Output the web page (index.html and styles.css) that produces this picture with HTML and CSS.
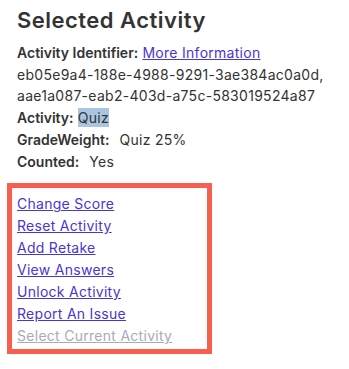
FILE: index.html
```html
<!DOCTYPE html>
<html>
<head>
<meta charset="utf-8">
<link rel="stylesheet" href="styles.css">
</head>
<body>
<div class="page">
  <div class="info">
    <h1 class="title">Selected Activity</h1>
    <div class="row"><span class="label">Activity Identifier:</span> <a class="link" href="#">More Information</a></div>
    <div class="row">eb05e9a4-188e-4988-9291-3ae384ac0a0d,</div>
    <div class="row">aae1a087-eab2-403d-a75c-583019524a87</div>
    <div class="row"><span class="label">Activity:</span> <span class="selected">Quiz</span></div>
    <div class="row"><span class="label label-gap">GradeWeight:</span>Quiz 25%</div>
    <div class="row"><span class="label label-gap">Counted:</span>Yes</div>
  </div>
  <div class="actions">
    <a class="link action" href="#">Change Score</a>
    <a class="link action" href="#">Reset Activity</a>
    <a class="link action" href="#">Add Retake</a>
    <a class="link action" href="#">View Answers</a>
    <a class="link action" href="#">Unlock Activity</a>
    <a class="link action" href="#">Report An Issue</a>
    <a class="link action disabled" href="#">Select Current Activity</a>
  </div>
</div>
</body>
</html>
```
FILE: styles.css
```css
html, body {
  margin: 0;
  padding: 0;
  background: #ffffff;
}
body {
  font-family: Inter, "Noto Sans", sans-serif;
  color: #333333;
  font-size: 14px;
  letter-spacing: 0.02em;
}
.page {
  padding: 6px 7px 0 7px;
}
.info {
  padding-left: 10px;
}
.title {
  margin: 0 0 8px 0;
  font-size: 22px;
  line-height: 28px;
  font-weight: 600;
  letter-spacing: 0.022em;
  color: #333333;
}
.row {
  line-height: 21.7px;
}
.label {
  font-weight: 600;
  letter-spacing: 0;
}
.label-gap {
  margin-right: 10px;
}
.selected {
  background: #a9c5e1;
  padding: 1px 0;
}
.link {
  color: #4b35d3;
  text-decoration: underline;
}
.actions {
  margin-top: 11px;
  width: 205px;
  box-sizing: border-box;
  border: 5px solid #f7604f;
  padding: 5px 5px 2px 5px;
  display: flex;
  flex-direction: column;
  align-items: flex-start;
}
.action {
  line-height: 22px;
}
.disabled {
  color: #aaaab8;
}
```
